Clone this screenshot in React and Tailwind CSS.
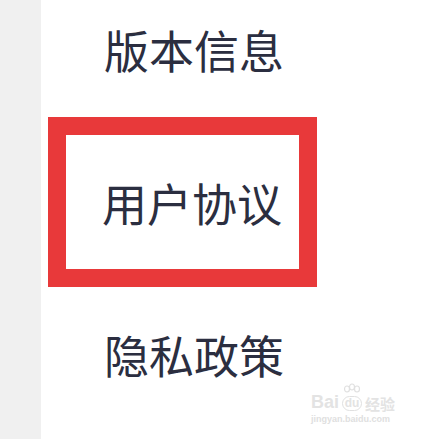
import React from 'react';

const cjk = { fontFamily: '"Noto Sans CJK SC", "Noto Sans", sans-serif' };

function Item({ label }) {
  return (
    <span className="text-[45px] leading-none text-[#2b2e40]" style={cjk}>
      {label}
    </span>
  );
}

// faint baidu jingyan watermark in the corner
function Watermark() {
  return (
    <div className="absolute left-[311px] top-[383px] flex flex-col items-start text-[#e3e3e3]" style={{ fontFamily: '"Liberation Sans", Arial, sans-serif' }}>
      <div className="flex items-end gap-[2px]">
        <span className="text-[18px] font-bold leading-none">Bai</span>
        <div className="relative flex flex-col items-center">
          <svg width="22" height="12" viewBox="0 0 22 12" className="mb-[1px]">
            <ellipse cx="6" cy="6" rx="2.5" ry="3" fill="none" stroke="#e0e0e0" strokeWidth="1.2" />
            <ellipse cx="11" cy="4" rx="2.5" ry="3" fill="none" stroke="#e0e0e0" strokeWidth="1.2" />
            <ellipse cx="16" cy="6" rx="2.5" ry="3" fill="none" stroke="#e0e0e0" strokeWidth="1.2" />
          </svg>
          <span className="rounded-full border border-[#e0e0e0] px-[2px] text-[12px] font-bold leading-[13px]">du</span>
        </div>
        <span className="text-[15px] font-bold leading-none" style={cjk}>经验</span>
      </div>
      <span className="mt-[4px] text-[9px] font-bold leading-none text-[#e0e0e0]">jingyan.baidu.com</span>
    </div>
  );
}

export default function App() {
  return (
    <div className="relative flex h-[439px] w-[428px] overflow-hidden bg-white">
      <div className="w-[41px] shrink-0 bg-[#f0f0f0]" />
      <div className="flex flex-1 flex-col">
        <div className="flex h-[98px] items-center pl-[63px]">
          <Item label="版本信息" />
        </div>
        <div className="ml-[7px] mt-[19px] flex h-[170px] w-[269px] items-center border-[18px] border-[#e8393a] pl-[36px]">
          <Item label="用户协议" />
        </div>
        <div className="flex h-[134px] items-center pl-[63px]">
          <Item label="隐私政策" />
        </div>
      </div>
      <Watermark />
    </div>
  );
}
